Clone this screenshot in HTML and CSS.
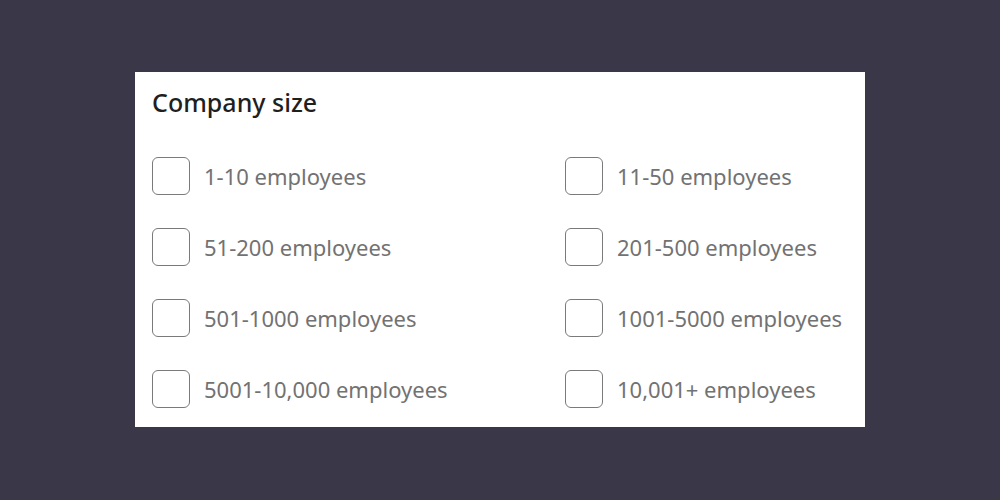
FILE: index.html
```html
<!DOCTYPE html>
<html lang="en">
<head>
    <meta charset="UTF-8">
    <title>Company size</title>
    <link rel="stylesheet" href="styles.css">
</head>
<body>
    <div class="card">
        <h2 class="title">Company size</h2>
        <div class="options">
            <label class="option"><input type="checkbox"><span class="box"></span>1-10 employees</label>
            <label class="option"><input type="checkbox"><span class="box"></span>11-50 employees</label>
            <label class="option"><input type="checkbox"><span class="box"></span>51-200 employees</label>
            <label class="option"><input type="checkbox"><span class="box"></span>201-500 employees</label>
            <label class="option"><input type="checkbox"><span class="box"></span>501-1000 employees</label>
            <label class="option"><input type="checkbox"><span class="box"></span>1001-5000 employees</label>
            <label class="option"><input type="checkbox"><span class="box"></span>5001-10,000 employees</label>
            <label class="option"><input type="checkbox"><span class="box"></span>10,001+ employees</label>
        </div>
    </div>
</body>
</html>
```

FILE: styles.css
```css
body {
    margin: 0;
    height: 500px;
    background-color: #3a3749;
    font-family: "Noto Sans", "Open Sans", sans-serif;
    display: flex;
    justify-content: center;
    align-items: flex-start;
    padding-top: 72px;
    box-sizing: border-box;
}
.card {
    width: 730px;
    height: 355px;
    box-sizing: border-box;
    background: #fff;
    padding: 13px 17px 0;
}
.title {
    margin: 0;
    font-size: 25px;
    font-weight: 500;
    color: #1f1f1f;
    line-height: 34px;
}
.options {
    display: grid;
    grid-template-columns: 413px 1fr;
    grid-auto-rows: 71px;
    margin-top: 38px;
}
.option {
    display: flex;
    align-items: flex-start;
    gap: 14px;
    font-size: 22px;
    color: #727272;
    line-height: 38px;
    cursor: pointer;
}
.option input {
    display: none;
}
.box {
    flex: none;
    width: 38px;
    height: 38px;
    box-sizing: border-box;
    border: 1.5px solid #7a7a7a;
    border-radius: 6px;
}
```
